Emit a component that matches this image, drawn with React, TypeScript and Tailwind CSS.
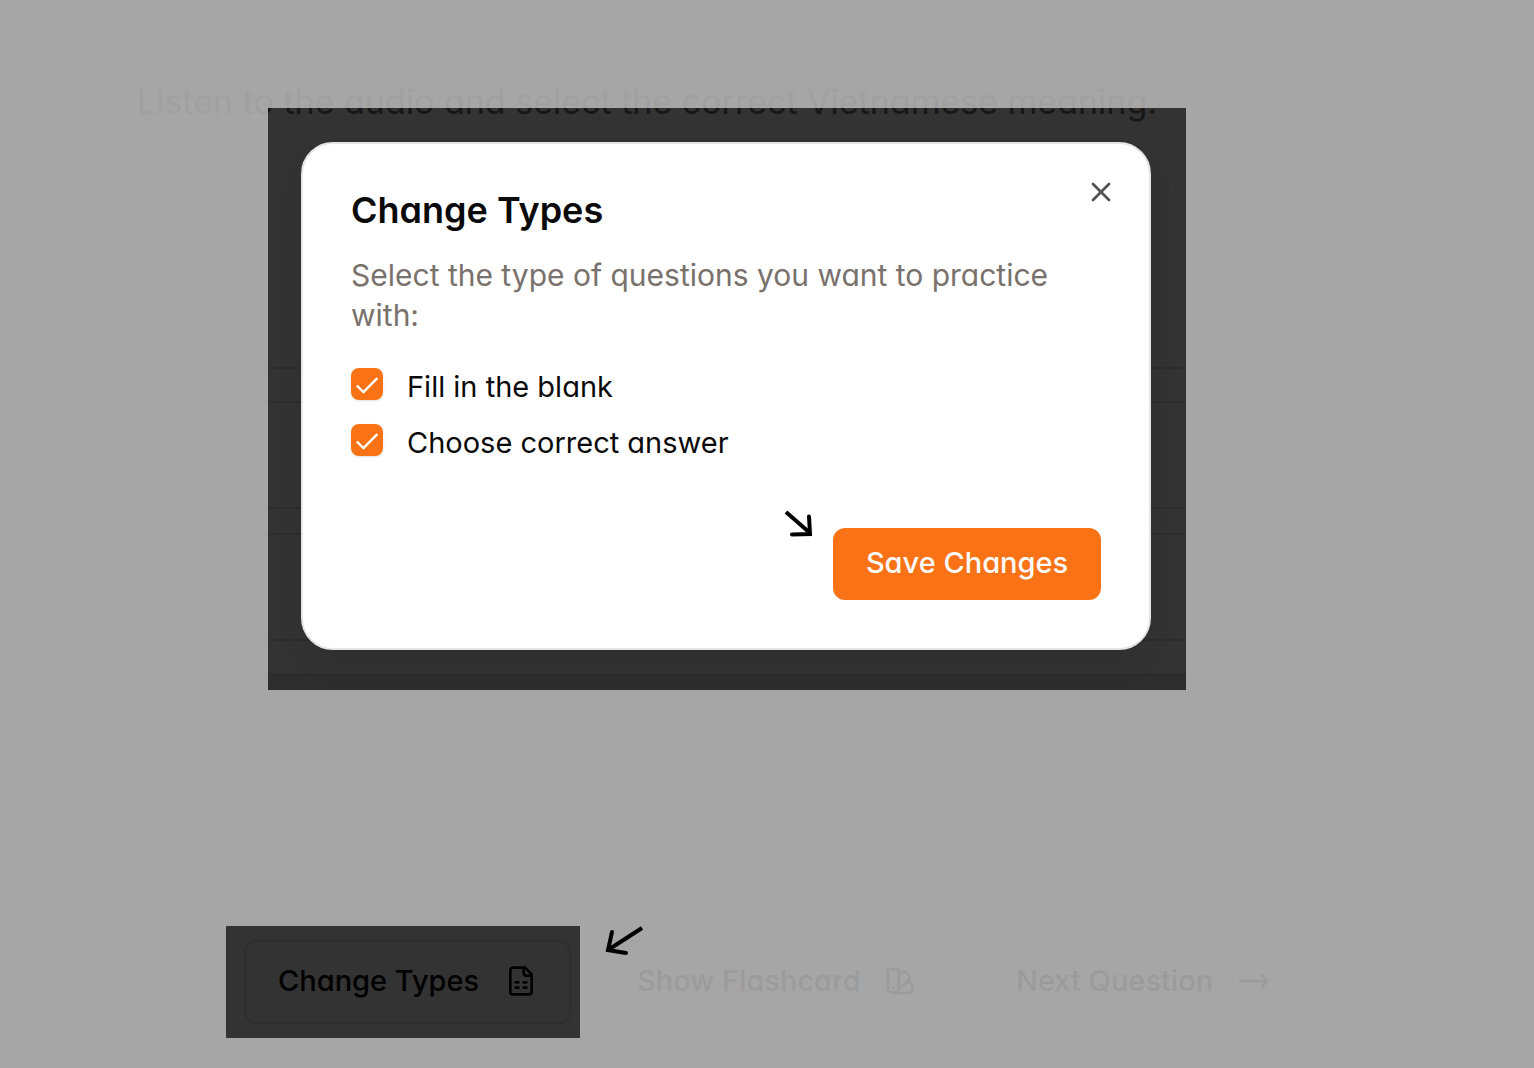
import { useState } from "react";
import { MoveRight, SwatchBook, X } from "lucide-react";

function FileTableIcon() {
  return (
    <svg
      className="size-8"
      viewBox="0 0 24 24"
      fill="none"
      stroke="currentColor"
      strokeWidth="2"
      strokeLinecap="round"
      strokeLinejoin="round"
      aria-hidden="true"
    >
      <path d="M15 2H6a2 2 0 0 0-2 2v16a2 2 0 0 0 2 2h12a2 2 0 0 0 2-2V7Z" />
      <path d="M14 2v4a2 2 0 0 0 2 2h4" />
      <path d="M8 13h2M14 13h2M8 17h2M14 17h2" />
    </svg>
  );
}

function Option({ label, defaultChecked }: { label: string; defaultChecked?: boolean }) {
  const [checked, setChecked] = useState(!!defaultChecked);
  return (
    <label className="flex h-8 items-start gap-6">
      <span className="relative size-8 shrink-0">
        <input
          type="checkbox"
          checked={checked}
          onChange={(e) => setChecked(e.target.checked)}
          className="block size-8 appearance-none rounded-lg border-2 border-[#f97316] shadow checked:bg-[#f97316]"
        />
        {checked && (
          <svg
            className="pointer-events-none absolute inset-0 size-8"
            viewBox="0 0 32 32"
            fill="none"
            stroke="#fff"
            strokeWidth="2.4"
            aria-hidden="true"
          >
            <path d="M5.8 17.5L12.5 24L26.3 10.2" />
          </svg>
        )}
      </span>
      <span className="text-[29px] leading-[38px] text-[#0a0a0a]">{label}</span>
    </label>
  );
}

function Page() {
  const button =
    "flex h-21 items-center justify-between rounded-xl border-2 border-[#2e2e2e] px-8 pb-0.5 text-[29px] font-medium whitespace-nowrap text-black";
  return (
    <main>
      <section className="mr-[88px] ml-[103px] rounded-b-[40px] border-x-2 border-b-[17px] border-x-[#313131] border-b-[#2d2d2d]">
        <header className="h-[369px] border-b-2 border-[#2d2d2d] px-8 pt-[78px]">
          <h1 className="text-[34px] leading-12 whitespace-nowrap text-[#171717]">
            Listen to the audio and select the correct Vietnamese meaning.
          </h1>
        </header>
        <div className="flex flex-col gap-6 px-8 py-8">
          <div className="h-27 rounded-2xl border-2 border-[#2d2d2d]" />
          <div className="h-27 rounded-2xl border-2 border-[#2d2d2d]" />
        </div>
      </section>
      <nav className="mt-[250px] flex gap-8 pl-[244px]">
        <button type="button" className={button + " w-[327px]"}>
          Change Types
          <FileTableIcon />
        </button>
        <button type="button" className={button + " w-[347px]"}>
          Show Flashcard
          <SwatchBook className="size-8" />
        </button>
        <button type="button" className={button + " w-[322px]"}>
          Next Question
          <MoveRight className="size-8" />
        </button>
      </nav>
    </main>
  );
}

function ChangeTypesDialog() {
  return (
    <div
      role="dialog"
      aria-labelledby="dialog-title"
      className="relative rounded-4xl border-2 border-[#e5e5e5] bg-white p-12 shadow-[0_16px_32px_-8px_rgba(0,0,0,0.12)]"
    >
      <button type="button" aria-label="Close" className="absolute top-8 right-8 text-[#525252]">
        <X className="size-8" />
      </button>
      <h2 id="dialog-title" className="text-[36px] leading-9 font-semibold text-[#0a0a0a]">
        Change Types
      </h2>
      <p className="mt-[27px] text-[30px] leading-10 text-[#78716c]">
        Select the type of questions you want to practice with:
      </p>
      <div className="mt-[33px] flex flex-col gap-6">
        <Option label="Fill in the blank" defaultChecked />
        <Option label="Choose correct answer" defaultChecked />
      </div>
      <div className="mt-18 flex justify-end">
        <button
          type="button"
          className="relative flex h-18 w-[268px] items-center justify-center rounded-xl bg-[#f97316] pb-0.5 text-[29px] font-medium whitespace-nowrap text-[#fafaf9]"
        >
          Save Changes
          <svg
            className="absolute -top-5 -left-13 h-8 w-9"
            viewBox="0 0 36 32"
            fill="none"
            stroke="#000"
            strokeWidth="4"
            aria-hidden="true"
          >
            <path d="M5 4L29 25" />
            <path d="M28 8.5L29 26L11 26.5" strokeLinecap="round" />
          </svg>
        </button>
      </div>
    </div>
  );
}

/* Light veil over the page, with one highlighted area per step. */
function Spotlights() {
  return (
    <div className="absolute inset-0 flex flex-col">
      <div className="overflow-hidden pt-[108px] pb-[118px]">
        <div className="mr-[348px] ml-[268px] pt-[34px] pr-[35px] pb-10 pl-[33px] shadow-[0_0_0_2000px_rgba(198,198,198,0.78)]">
          <ChangeTypesDialog />
        </div>
      </div>
      <div className="flex-1 overflow-hidden pt-[118px]">
        <div className="relative ml-[226px] h-28 w-[354px] shadow-[0_0_0_2000px_rgba(198,198,198,0.78)]">
          <svg
            className="absolute top-0 left-full ml-5 h-9 w-12"
            viewBox="0 0 48 36"
            fill="none"
            stroke="#000"
            strokeWidth="4"
            aria-hidden="true"
          >
            <path d="M42 2L8 24" />
            <path d="M12 6L8 24L26 27" strokeLinecap="round" />
          </svg>
        </div>
      </div>
    </div>
  );
}

export default function App() {
  return (
    <div className="relative min-h-screen overflow-hidden bg-[#333] font-['Inter',sans-serif] [font-feature-settings:'cv11']">
      <Page />
      <Spotlights />
    </div>
  );
}
